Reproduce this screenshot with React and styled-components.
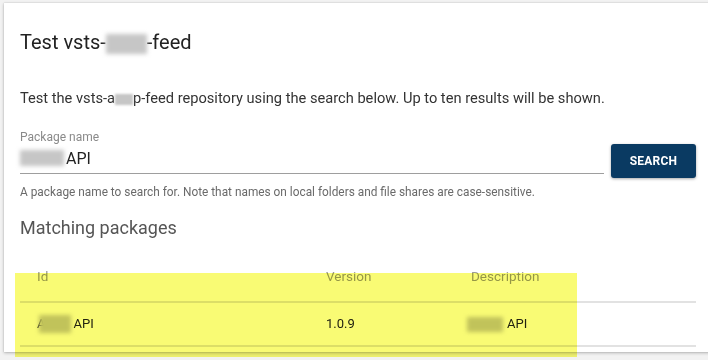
import React from "react";
import styled, { createGlobalStyle } from "styled-components";

const Global = createGlobalStyle`
  html, body { margin: 0; padding: 0; background: #f2f2f2; }
  body { font-family: Roboto, "Noto Sans", "Liberation Sans", sans-serif; overflow: hidden; }
`;

const Page = styled.div`
  width: 708px;
  height: 360px;
  overflow: hidden;
  position: relative;
  padding: 3px 0 0 4px;
  box-sizing: border-box;
`;

const Card = styled.div`
  width: 730px;
  height: 349px;
  background: #fff;
  box-shadow: 0 1px 3px rgba(0,0,0,0.25), 0 0 1px rgba(0,0,0,0.2);
  box-sizing: border-box;
  padding: 27px 0 0 16px;
  display: flex;
  flex-direction: column;
`;

const Title = styled.h1`
  margin: 0;
  font-size: 20px;
  font-weight: 400;
  color: #222;
  line-height: 24px;
`;

const Intro = styled.p`
  margin: 35px 0 0;
  font-size: 14.65px;
  color: #333;
  line-height: 18px;
`;

const Redact = styled.span`
  display: inline-block;
  width: ${p => p.$w}px;
  height: ${p => p.$h}px;
  background: #c6c6c6;
  filter: blur(${p => p.$blur || 1.5}px);
  vertical-align: ${p => p.$va || "middle"};
`;

const FieldRow = styled.div`
  display: flex;
  align-items: flex-start;
  margin-top: 23px;
  width: 676px;
`;

const Field = styled.div`
  flex: 0 0 584px;
  display: flex;
  flex-direction: column;
`;

const Label = styled.label`
  font-size: 12px;
  color: #8a8a8a;
  line-height: 14px;
`;

const InputLine = styled.div`
  display: flex;
  align-items: center;
  height: 26px;
  padding-bottom: 5px;
  box-sizing: border-box;
  margin-top: 4px;
  border-bottom: 1px solid #9e9e9e;
  font-size: 16px;
  color: #222;
  gap: 2px;
`;

const Button = styled.button`
  margin: 14px 0 0 7px;
  width: 85px;
  height: 34px;
  border: none;
  border-radius: 3px;
  background: #0a3a62;
  color: #fff;
  font-family: inherit;
  font-weight: 700;
  font-size: 12px;
  letter-spacing: 0.2px;
  box-shadow: 0 1px 3px rgba(0,0,0,0.35);
`;

const Helper = styled.div`
  margin-top: 7px;
  font-size: 11.85px;
  color: #6a6a6a;
  line-height: 14px;
`;

const Subtitle = styled.h2`
  margin: 18px 0 0;
  font-size: 18px;
  font-weight: 400;
  color: #555;
  line-height: 22px;
`;

const Table = styled.div`
  margin-top: 29px;
  width: 676px;
  display: flex;
  flex-direction: column;
`;

const Row = styled.div`
  display: grid;
  grid-template-columns: 289px 145px 1fr;
  height: ${p => p.$h}px;
  align-items: ${p => (p.$head ? "start" : "center")};
  border-bottom: 2px solid #e2e2e2;
  box-sizing: border-box;
`;

const Cell = styled.div`
  padding-left: 17px;
  font-size: ${p => (p.$head ? 13.5 : 13)}px;
  line-height: 16px;
  color: ${p => (p.$head ? "#9a9a9a" : "#222")};
  display: flex;
  align-items: center;
`;

const Highlight = styled.div`
  position: absolute;
  left: 15px;
  top: 273px;
  width: 562px;
  height: 84px;
  background: #f9fb74;
  mix-blend-mode: multiply;
  pointer-events: none;
`;

export default function App() {
  return (
    <>
      <Global />
      <Page>
        <Card>
          <Title>
            Test vsts-<Redact $w={41} $h={20} $blur={2} />-feed
          </Title>
          <Intro>
            Test the vsts-a<Redact $w={18} $h={11} $blur={1} />p-feed repository using the search below. Up to ten results will be shown.
          </Intro>
          <FieldRow>
            <Field>
              <Label>Package name</Label>
              <InputLine>
                <Redact $w={44} $h={16} $blur={2} />
                <span>API</span>
              </InputLine>
            </Field>
            <Button>SEARCH</Button>
          </FieldRow>
          <Helper>
            A package name to search for. Note that names on local folders and file shares are case-sensitive.
          </Helper>
          <Subtitle>Matching packages</Subtitle>
          <Table>
            <Row $head $h={35}>
              <Cell $head>Id</Cell>
              <Cell $head>Version</Cell>
              <Cell $head>Description</Cell>
            </Row>
            <Row $h={44}>
              <Cell>
                A<Redact $w={32} $h={18} $blur={2} style={{ marginLeft: -6 }} />
                <span style={{ marginLeft: 2 }}>API</span>
              </Cell>
              <Cell>1.0.9</Cell>
              <Cell>
                <Redact $w={36} $h={15} $blur={2} style={{ marginLeft: -4 }} />
                <span style={{ marginLeft: 4 }}>API</span>
              </Cell>
            </Row>
          </Table>
        </Card>
        <Highlight />
      </Page>
    </>
  );
}
